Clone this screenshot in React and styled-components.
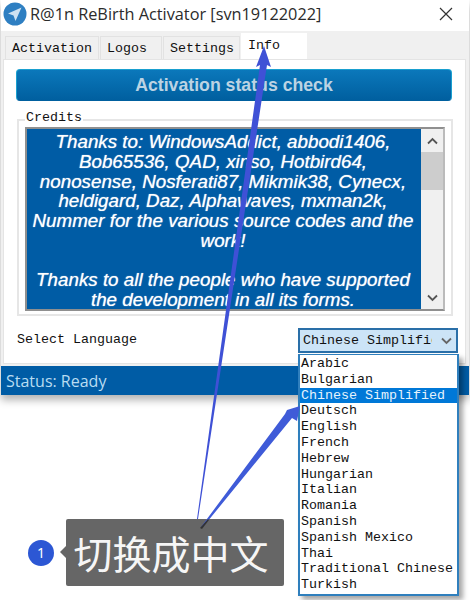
import styled, { createGlobalStyle } from 'styled-components';

const GlobalStyle = createGlobalStyle`
  html, body { margin: 0; padding: 0; background: #fff; }
  * { box-sizing: border-box; }
`;

const mono = `"Liberation Mono", "Noto Sans CJK SC", monospace`;

const Page = styled.div`
  position: relative;
  width: 470px;
  height: 600px;
  overflow: hidden;
  background: #fff;
`;

const Window = styled.div`
  width: 468px;
  height: 395px;
  margin-left: 1px;
  display: flex;
  flex-direction: column;
  background: #f0f0f0;
  box-shadow: 0 5px 8px rgba(0, 0, 0, 0.3);
`;

const TitleBar = styled.div`
  height: 31px;
  flex: none;
  display: flex;
  align-items: center;
  padding: 0 16px 4px 2px;
  gap: 3px;
  background: #fff;
`;

const Title = styled.div`
  flex: 1;
  font: 16.3px "Open Sans", sans-serif;
  color: #2b2b2b;
  white-space: nowrap;
`;

const TabStrip = styled.div`
  height: 28px;
  flex: none;
  display: flex;
  align-items: flex-end;
  padding-left: 4px;
  gap: 1px;
`;

const Tab = styled.div`
  width: ${(p) => p.$w}px;
  height: ${(p) => (p.$active ? 26 : 23)}px;
  padding: ${(p) => (p.$active ? '4px 0 0 6px' : '4px 0 0 6px')};
  font: 13.33px/16px ${mono};
  color: #111;
  background: ${(p) => (p.$active ? '#fff' : '#f0f0f0')};
  border: 1px solid ${(p) => (p.$active ? '#fff' : '#e2e2e2')};
  border-bottom: none;
`;

const Panel = styled.div`
  height: 305px;
  flex: none;
  margin: 0 3px 0 2px;
  padding: 9px 12px 0 12px;
  background: #fff;
  border: 1px solid #e4e4e4;
`;

const StatusButton = styled.button`
  display: block;
  width: 436px;
  height: 32px;
  padding: 0;
  border: 1px solid #1aa0d0;
  border-bottom-color: #00609f;
  border-radius: 4px;
  background: linear-gradient(#0b78bb, #005f9f);
  color: #bcd3e3;
  font: bold 17.7px "Liberation Sans", sans-serif;
`;

const Credits = styled.div`
  position: relative;
  width: 436px;
  height: 197px;
  margin: 18px 0 0 1px;
  padding: 6px 6px 3px 6px;
  border: 2px solid #e6e6e6;
`;

const Legend = styled.span`
  position: absolute;
  top: -11px;
  left: 6px;
  padding: 0 1px;
  background: #fff;
  font: 13.33px/15px ${mono};
  color: #111;
`;

const CreditsFrame = styled.div`
  height: 184px;
  display: flex;
  border: 2px solid #8f8f8f;
  border-right-color: #bbb;
  background: #f0f0f0;
`;

const CreditsText = styled.div`
  width: 394px;
  flex: none;
  overflow: hidden;
  padding: 3px 5px 0 3px;
  background: #005ca5;
  color: #fff;
  text-align: center;
  font: italic 18.8px/19.75px "Liberation Sans", sans-serif;
  text-shadow: 0 0 1px rgba(255, 255, 255, 0.8);
  p { margin: 0 0 19.75px; }
`;

const ScrollBar = styled.div`
  flex: 1;
  display: flex;
  flex-direction: column;
  align-items: stretch;
  color: #555;
`;

const ScrollButton = styled.div`
  height: 23px;
  flex: none;
  display: flex;
  align-items: center;
  justify-content: center;
`;

const ScrollTrack = styled.div`
  flex: 1;
`;

const ScrollThumb = styled.div`
  height: 38px;
  background: #cdcdcd;
`;

const LanguageRow = styled.div`
  display: flex;
  align-items: center;
  justify-content: space-between;
  width: 442px;
  height: 25px;
  margin-top: 12px;
  font: 13.33px/16px ${mono};
  color: #111;
`;

const LanguageLabel = styled.span`
  margin: 0 0 2px 1px;
`;

const LangSelect = styled.div`
  width: 160px;
  height: 25px;
  display: flex;
  align-items: center;
  justify-content: space-between;
  padding: 0 3px 0 3px;
  background: #cce4f7;
  border: 2px solid #2a6fa8;
`;

const SelectValue = styled.span`
  width: 129px;
  overflow: hidden;
  white-space: nowrap;
`;

const Gap = styled.div`
  height: 2px;
  flex: none;
`;

const StatusBar = styled.div`
  flex: 1;
  padding: 4px 0 0 5px;
  background: #005ca5;
  color: #b9dcf2;
  font: 16px/22px "Open Sans", sans-serif;
`;

const DropList = styled.ul`
  position: absolute;
  left: 298px;
  top: 354px;
  width: 161px;
  margin: 0;
  padding: 1px 0 1px;
  list-style: none;
  background: #fff;
  border: 2px solid #2f7fbd;
  border-top-width: 1px;
  box-shadow: 4px 4px 5px rgba(0, 0, 0, 0.35);
`;

const DropItem = styled.li`
  height: 15.8px;
  padding-left: 1px;
  font: 13.33px/15.8px ${mono};
  white-space: nowrap;
  color: ${(p) => (p.$selected ? '#e6f3fd' : '#111')};
  background: ${(p) => (p.$selected ? '#0078d7' : 'transparent')};
`;

const ArrowLayer = styled.svg`
  position: absolute;
  left: 0;
  top: 0;
  z-index: 2;
  pointer-events: none;
`;

const Callout = styled.div`
  position: absolute;
  left: 28px;
  top: 519px;
  display: flex;
  align-items: center;
  gap: 12px;
`;

const Badge = styled.div`
  width: 26px;
  height: 26px;
  border-radius: 50%;
  display: flex;
  align-items: center;
  justify-content: center;
  background: #2c57d4;
  color: #fff;
  font: 14px "Noto Sans", sans-serif;
`;

const Bubble = styled.div`
  position: relative;
  width: 218px;
  height: 67px;
  padding-right: 8px;
  display: flex;
  align-items: center;
  justify-content: center;
  border-radius: 2px;
  background: #666;
  color: #f6f6f6;
  font: 39px/1 "Noto Sans CJK SC", sans-serif;
  &::before {
    content: '';
    position: absolute;
    left: -6px;
    top: 27px;
    border-style: solid;
    border-width: 6px 6px 6px 0;
    border-color: transparent #666 transparent transparent;
  }
`;

const languages = [
  'Arabic', 'Bulgarian', 'Chinese Simplified', 'Deutsch', 'English', 'French', 'Hebrew',
  'Hungarian', 'Italian', 'Romania', 'Spanish', 'Spanish Mexico', 'Thai', 'Traditional Chinese', 'Turkish',
];

const AppIcon = () => (
  <svg width="24" height="24" viewBox="0 0 24 24">
    <circle cx="12" cy="12" r="11.5" fill="#2e7fc2" />
    <path d="M18.5 5.5 L5 11.5 L10.5 13.5 L12.5 19 Z" fill="#cfe2f2" />
  </svg>
);

const CloseIcon = () => (
  <svg width="14" height="14" viewBox="0 0 14 14">
    <path d="M1 1 L13 13 M13 1 L1 13" stroke="#333" strokeWidth="1.2" fill="none" />
  </svg>
);

const Chevron = ({ up, color = '#555', w = 13 }) => (
  <svg width={w} height="8" viewBox="0 0 13 8">
    <path d={up ? 'M2 6.5 L6.5 2 L11 6.5' : 'M2 1.5 L6.5 6 L11 1.5'} stroke={color} strokeWidth="1.8" fill="none" />
  </svg>
);

const App = () => (
  <Page>
    <GlobalStyle />
    <Window>
      <TitleBar>
        <AppIcon />
        <Title>R@1n ReBirth Activator [svn19122022]</Title>
        <CloseIcon />
      </TitleBar>
      <TabStrip>
        <Tab $w={94}>Activation</Tab>
        <Tab $w={62}>Logos</Tab>
        <Tab $w={77}>Settings</Tab>
        <Tab $w={66} $active>Info</Tab>
      </TabStrip>
      <Panel>
        <StatusButton>Activation status check</StatusButton>
        <Credits>
          <Legend>Credits</Legend>
          <CreditsFrame>
            <CreditsText>
              <p>
                Thanks to: WindowsAddict, abbodi1406, Bob65536, QAD, xinso, Hotbird64, nonosense, Nosferati87,
                Mikmik38, Cynecx, heldigard, Daz, Alphawaves, mxman2k, Nummer for the various source codes and
                the work!
              </p>
              <p>Thanks to all the people who have supported the development in all its forms.</p>
            </CreditsText>
            <ScrollBar>
              <ScrollButton><Chevron up /></ScrollButton>
              <ScrollTrack><ScrollThumb /></ScrollTrack>
              <ScrollButton><Chevron /></ScrollButton>
            </ScrollBar>
          </CreditsFrame>
        </Credits>
        <LanguageRow>
          <LanguageLabel>Select Language</LanguageLabel>
          <LangSelect>
            <SelectValue>Chinese Simplified</SelectValue>
            <Chevron color="#666" />
          </LangSelect>
        </LanguageRow>
      </Panel>
      <Gap />
      <StatusBar>Status: Ready</StatusBar>
    </Window>
    <DropList>
      {languages.map((lang) => (
        <DropItem key={lang} $selected={lang === 'Chinese Simplified'}>{lang}</DropItem>
      ))}
    </DropList>
    <Callout>
      <Badge>1</Badge>
      <Bubble>切换成中文</Bubble>
    </Callout>
    <ArrowLayer width="470" height="600" viewBox="0 0 470 600">
      <polygon points="264,46 271,67 267,65 198,519 197,519 260,65 256,67" fill="#3f51d6" />
      <polygon points="300,406 297,421 292,418 203,527 201,527 285,414 287,410" fill="#3f5bd8" />
      <polygon points="208,519 209,520 202,529 200,528" fill="#333" />
    </ArrowLayer>
  </Page>
);

export default App;
